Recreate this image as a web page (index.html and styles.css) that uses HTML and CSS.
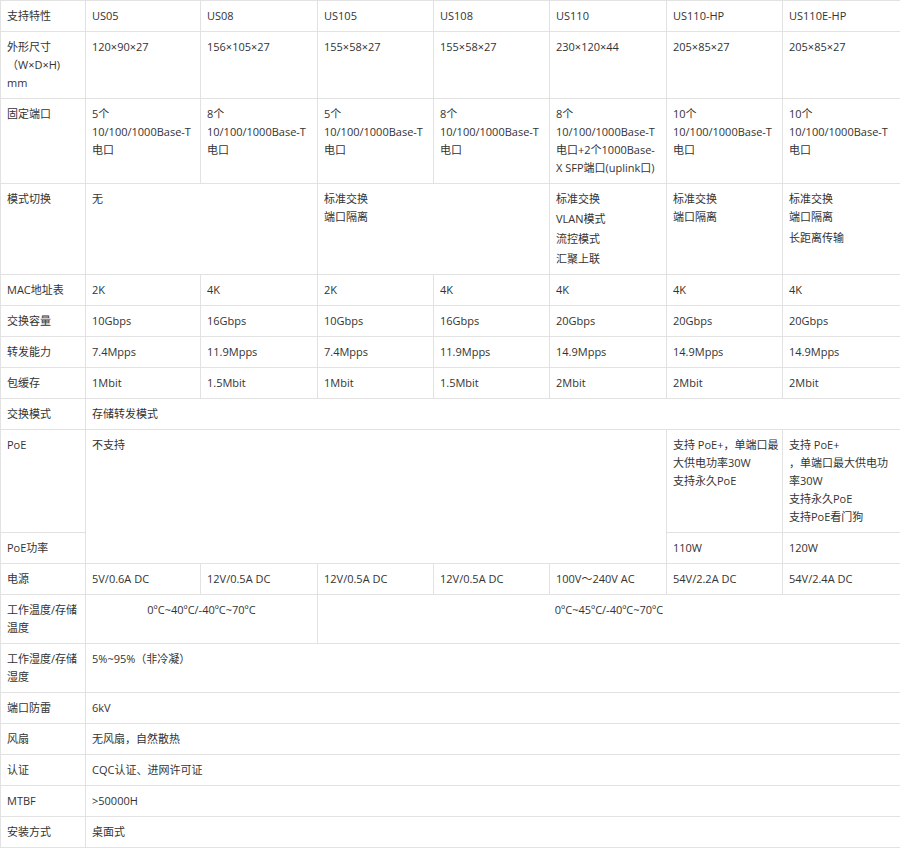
FILE: index.html
```html
<!DOCTYPE html>
<html lang="zh-CN">
<head>
<meta charset="utf-8">
<title>规格参数</title>
<link rel="stylesheet" href="styles.css">
</head>
<body>
<table class="spec">
  <colgroup>
    <col class="c-label">
    <col class="c-2"><col class="c-3"><col class="c-4"><col class="c-5"><col class="c-6"><col class="c-7"><col class="c-8">
  </colgroup>
  <tbody>
    <tr>
      <td>支持特性</td><td>US05</td><td>US08</td><td>US105</td><td>US108</td><td>US110</td><td>US110-HP</td><td>US110E-HP</td>
    </tr>
    <tr>
      <td>外形尺寸<br>（W×D×H)<br>mm</td><td>120×90×27</td><td>156×105×27</td><td>155×58×27</td><td>155×58×27</td><td>230×120×44</td><td>205×85×27</td><td>205×85×27</td>
    </tr>
    <tr>
      <td>固定端口</td>
      <td>5个<br>10/100/1000Base-T<br>电口</td>
      <td>8个<br>10/100/1000Base-T<br>电口</td>
      <td>5个<br>10/100/1000Base-T<br>电口</td>
      <td>8个<br>10/100/1000Base-T<br>电口</td>
      <td>8个<br>10/100/1000Base-T<br>电口+2个1000Base-<br>X SFP端口(uplink口)</td>
      <td>10个<br>10/100/1000Base-T<br>电口</td>
      <td>10个<br>10/100/1000Base-T<br>电口</td>
    </tr>
    <tr>
      <td>模式切换</td>
      <td colspan="2">无</td>
      <td colspan="2">标准交换<br>端口隔离</td>
      <td><div>标准交换</div><div class="gap2">VLAN模式</div><div class="gap2">流控模式</div><div class="gap2">汇聚上联</div></td>
      <td>标准交换<br>端口隔离</td>
      <td><div>标准交换</div><div>端口隔离</div><div class="gap3">长距离传输</div></td>
    </tr>
    <tr>
      <td>MAC地址表</td><td>2K</td><td>4K</td><td>2K</td><td>4K</td><td>4K</td><td>4K</td><td>4K</td>
    </tr>
    <tr>
      <td>交换容量</td><td>10Gbps</td><td>16Gbps</td><td>10Gbps</td><td>16Gbps</td><td>20Gbps</td><td>20Gbps</td><td>20Gbps</td>
    </tr>
    <tr>
      <td>转发能力</td><td>7.4Mpps</td><td>11.9Mpps</td><td>7.4Mpps</td><td>11.9Mpps</td><td>14.9Mpps</td><td>14.9Mpps</td><td>14.9Mpps</td>
    </tr>
    <tr>
      <td>包缓存</td><td>1Mbit</td><td>1.5Mbit</td><td>1Mbit</td><td>1.5Mbit</td><td>2Mbit</td><td>2Mbit</td><td>2Mbit</td>
    </tr>
    <tr>
      <td>交换模式</td><td colspan="7">存储转发模式</td>
    </tr>
    <tr>
      <td>PoE</td>
      <td colspan="5" rowspan="2">不支持</td>
      <td>支持 PoE+，单端口最<br>大供电功率30W<br>支持永久PoE</td>
      <td>支持 PoE+<br>，单端口最大供电功<br>率30W<br>支持永久PoE<br>支持PoE看门狗</td>
    </tr>
    <tr>
      <td>PoE功率</td><td>110W</td><td>120W</td>
    </tr>
    <tr>
      <td>电源</td><td>5V/0.6A DC</td><td>12V/0.5A DC</td><td>12V/0.5A DC</td><td>12V/0.5A DC</td><td>100V～240V AC</td><td>54V/2.2A DC</td><td>54V/2.4A DC</td>
    </tr>
    <tr>
      <td>工作温度/存储<br>温度</td>
      <td colspan="2" class="center">0ºC~40ºC/-40ºC~70ºC</td>
      <td colspan="5" class="center">0ºC~45ºC/-40ºC~70ºC</td>
    </tr>
    <tr>
      <td>工作湿度/存储<br>湿度</td><td colspan="7">5%~95%（非冷凝）</td>
    </tr>
    <tr>
      <td>端口防雷</td><td colspan="7">6kV</td>
    </tr>
    <tr>
      <td>风扇</td><td colspan="7">无风扇，自然散热</td>
    </tr>
    <tr>
      <td>认证</td><td colspan="7">CQC认证、进网许可证</td>
    </tr>
    <tr>
      <td>MTBF</td><td colspan="7">&gt;50000H</td>
    </tr>
    <tr>
      <td>安装方式</td><td colspan="7">桌面式</td>
    </tr>
  </tbody>
</table>
</body>
</html>
```
FILE: styles.css
```css
html, body {
  margin: 0;
  padding: 0;
  background: #ffffff;
}

body {
  font-family: "Open Sans", "Noto Sans CJK SC", sans-serif;
  font-size: 11px;
  line-height: 18px;
  color: #333333;
}

.spec {
  width: 900px;
  table-layout: fixed;
  border-collapse: collapse;
  border-spacing: 0;
}

.c-label { width: 85px; }
.c-2 { width: 115px; }
.c-3 { width: 117px; }
.c-4 { width: 116px; }
.c-5 { width: 116px; }
.c-6 { width: 117px; }
.c-7 { width: 116px; }
.c-8 { width: 118px; }

.spec td {
  border: 1px solid #e2e2e2;
  padding: 6px 6px;
  vertical-align: top;
  text-align: left;
  white-space: nowrap;
  overflow: hidden;
}

.spec td.center {
  text-align: center;
}

.gap2 { margin-top: 2px; }
.gap3 { margin-top: 3px; }
```
